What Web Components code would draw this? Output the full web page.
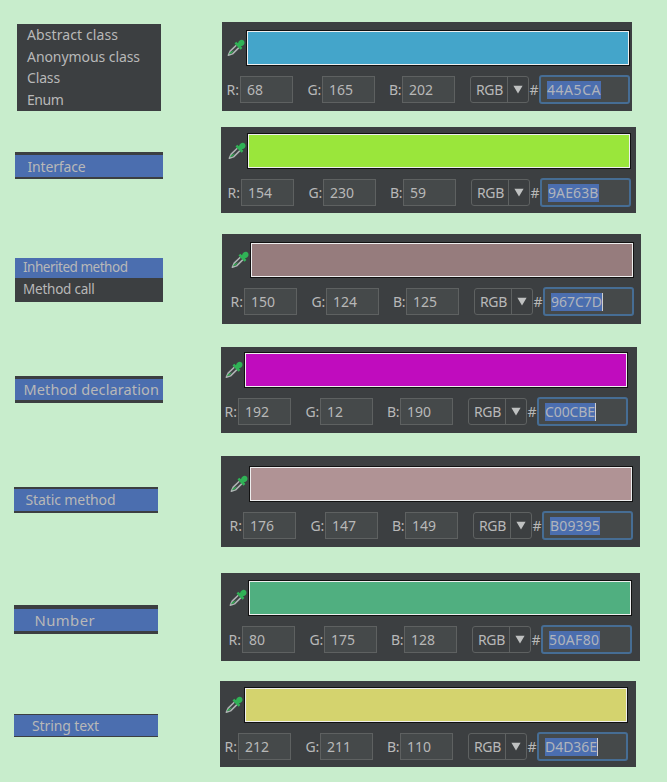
<!DOCTYPE html>
<html lang="en">
<head>
<meta charset="utf-8">
<title>Syntax colours</title>
<style>
html, body { margin: 0; padding: 0; }
body { width: 667px; height: 782px; overflow: hidden; background: #c8edcc; color: #b8b8b8; font: 14px "Noto Sans", "Open Sans", sans-serif; }
</style>
</head>
<body>
<colour-sheet></colour-sheet>
<script>
// Text run spread to an exact advance width with letter spacing.
class FitText extends HTMLElement {
  connectedCallback() {
    const root = this.attachShadow({ mode: 'open' });
    root.innerHTML = `<style>:host{display:inline-block;white-space:pre}span{display:inline-block}</style><span><slot></slot></span>`;
    const w = parseFloat(this.getAttribute('w'));
    if (!w) return;
    const span = root.querySelector('span');
    const n = this.textContent.length;
    const natural = span.getBoundingClientRect().width;
    this.style.letterSpacing = ((w - natural) / n).toFixed(3) + 'px';
  }
}
customElements.define('fit-text', FitText);

class EyeDropper extends HTMLElement {
  connectedCallback() {
    this.attachShadow({ mode: 'open' }).innerHTML = `
<style>:host{display:block;width:18px;height:18px}svg{display:block}</style>
<svg width="18" height="18" viewBox="0 0 18 18">
  <path d="M9.3 6.2 3.2 12.1 1.3 16.3 5.6 14.9 11.9 8.6" fill="none" stroke="#aeb3b3" stroke-width="1.5" stroke-linejoin="round"/>
  <path d="M3 13.2 7.2 11.3 4.9 14 1.8 15.6z" fill="#2fae50"/>
  <path d="M7.5 4.5 9.2 2.7 11 4.2C11.4 2 13.2.7 15 .8 17.1 1 18 3.1 17.3 4.9 16.7 6.2 15.5 6.9 13.9 7.1L15.4 8.9 13.6 10.7z" fill="#30b256"/>
</svg>`;
  }
}
customElements.define('eye-dropper', EyeDropper);

class ChannelField extends HTMLElement {
  connectedCallback() {
    this.attachShadow({ mode: 'open' }).innerHTML = `
<style>
:host{display:flex;height:27px;line-height:27px}
.name{box-sizing:border-box;display:flex;justify-content:flex-end;width:var(--lead);padding-right:1px;flex:none}
.box{box-sizing:border-box;width:53px;height:27px;padding-left:6px;border:1px solid #5e6161;background:#45494a;line-height:26px}
</style>
<div class="name"><fit-text w="${this.getAttribute('nw')}">${this.getAttribute('name')}:</fit-text></div>
<div class="box"><slot></slot></div>`;
  }
}
customElements.define('channel-field', ChannelField);

class ModeSelect extends HTMLElement {
  connectedCallback() {
    this.attachShadow({ mode: 'open' }).innerHTML = `
<style>
:host{display:flex;box-sizing:border-box;width:59px;height:27px;margin-left:15px;border:1px solid #5e6161;border-radius:3px;line-height:25px}
.text{box-sizing:border-box;width:37px;padding-left:5px;border-right:1px solid #5e6161}
.arrow{flex:1;display:flex;align-items:center;justify-content:center}
</style>
<div class="text"><fit-text w="27">RGB</fit-text></div>
<div class="arrow"><svg width="10" height="9" viewBox="0 0 10 9"><path d="M.4.8h9.2L5 8.4z" fill="#bfc1c1"/></svg></div>`;
  }
}
customElements.define('mode-select', ModeSelect);

class HexField extends HTMLElement {
  connectedCallback() {
    this.attachShadow({ mode: 'open' }).innerHTML = `
<style>
:host{display:flex;align-items:center;box-sizing:border-box;width:91px;height:29px;margin-top:-1px;padding-left:6px;border:2px solid #466d94;border-radius:3px;background:#45494a}
.sel{height:18px;line-height:18px;background:#4b6eaf;color:#b0b4bc;overflow:hidden}
.caret{width:1px;height:18px;background:#d0d0d0}
</style>
<div class="sel"><fit-text w="${this.getAttribute('w')}">${this.getAttribute('value')}</fit-text></div>${this.hasAttribute('caret') ? '<div class="caret"></div>' : ''}`;
  }
}
customElements.define('hex-field', HexField);

class ColourPicker extends HTMLElement {
  connectedCallback() {
    const a = n => this.getAttribute(n);
    const [r, g, b] = a('rgb').split(',');
    this.attachShadow({ mode: 'open' }).innerHTML = `
<style>
:host{display:block;box-sizing:border-box;background:#3c3f41;overflow:hidden}
.top{display:flex;height:36px}
eye-dropper{margin:9px 1px 0 1px}
.swatch{box-sizing:border-box;width:384px;height:36px;border:1px solid #111;box-shadow:inset 0 0 0 1px #eee;background:#${a('hex')}}
.fields{display:flex;margin-top:10px;height:27px}
.hash{width:10px;line-height:27px;display:flex;justify-content:center}
</style>
<div class="top"><eye-dropper></eye-dropper><div class="swatch"></div></div>
<div class="fields">
  <channel-field name="R" nw="12.5" style="--lead:14px">${r}</channel-field>
  <channel-field name="G" nw="13.5" style="--lead:29px">${g}</channel-field>
  <channel-field name="B" nw="12" style="--lead:27px">${b}</channel-field>
  <mode-select></mode-select>
  <div class="hash"><fit-text w="9">#</fit-text></div>
  <hex-field value="${a('hex')}" w="${a('hw')}"${this.hasAttribute('caret') ? ' caret' : ''}></hex-field>
</div>`;
  }
}
customElements.define('colour-picker', ColourPicker);

class TokenList extends HTMLElement {
  connectedCallback() {
    this.attachShadow({ mode: 'open' }).innerHTML = `
<style>:host{display:block;box-sizing:border-box;background:#3c3f41;overflow:hidden}</style><slot></slot>`;
  }
}
customElements.define('token-list', TokenList);

class TokenItem extends HTMLElement {
  connectedCallback() {
    this.attachShadow({ mode: 'open' }).innerHTML = `
<style>:host{display:block;box-sizing:border-box;white-space:nowrap}:host([selected]){background:#4b6eaf}</style><slot></slot>`;
  }
}
customElements.define('token-item', TokenItem);

// box: left, top inside the row, width, height, padding above the first item
// items: text, indent, advance width, font size, item height, line height, selected
const ROWS = [
  { h: 119, box: [17, 24, 144, 87, 0], items: [['Abstract class', 10, 91, 14, 21, 22], ['Anonymous class', 10, 113, 14, 22, 23], ['Class', 10, 33, 14, 21, 22], ['Enum', 10, 36.5, 14, 22, 23]],
    p: [222, 22, 410, 89, 246, 30], rgb: '68,165,202', hex: '44A5CA', hw: 54 },
  { h: 104, box: [15, 33, 148, 27, 3], items: [['Interface', 12.5, 58, 14, 22, 24, 1]],
    p: [221, 8, 415, 86, 247, 14], rgb: '154,230,59', hex: '9AE63B', hw: 50.5 },
  { h: 112, box: [15, 35, 148, 44, 0], items: [['Inherited method', 8, 104.5, 13.5, 20, 19, 1], ['Method call', 8, 71.5, 13.5, 24, 22]],
    p: [222, 11, 419, 90, 250, 19], rgb: '150,124,125', hex: '967C7D', hw: 51, caret: 1 },
  { h: 110, box: [15, 41, 148, 27, 3], items: [['Method declaration', 8.5, 135.5, 14.5, 21, 21, 1]],
    p: [221, 12, 416, 86, 244, 17], rgb: '192,12,190', hex: 'C00CBE', hw: 50, caret: 1 },
  { h: 115, box: [14, 42, 144, 26, 2], items: [['Static method', 11.5, 90, 14, 22, 22, 1]],
    p: [221, 11, 419, 91, 249, 21], rgb: '176,147,149', hex: 'B09395', hw: 50 },
  { h: 110, box: [14, 45, 144, 29, 4], items: [['Number', 20.5, 60.5, 14.8, 22, 23, 1]],
    p: [221, 13, 419, 88, 248, 20], rgb: '80,175,128', hex: '50AF80', hw: 50.5 },
  { h: 112, box: [14, 44, 144, 23, 1], items: [['String text', 18, 67, 14, 21, 21, 1]],
    p: [220, 11, 416, 86, 244, 17], rgb: '212,211,110', hex: 'D4D36E', hw: 52, caret: 1 }
];

class ColourSheet extends HTMLElement {
  connectedCallback() {
    this.attachShadow({ mode: 'open' }).innerHTML = `
<style>
:host{display:flex;flex-direction:column;width:667px;height:782px;overflow:hidden}
.row{display:flex;align-items:flex-start;flex:none}
token-list,colour-picker{flex:none}
</style>` + ROWS.map(r => {
      const [x, y, w, h, pad] = r.box, [px, py, pw, ph, sx, sy] = r.p;
      return `<div class="row" style="height:${r.h}px">
<token-list style="margin:${y}px 0 0 ${x}px;width:${w}px;height:${h}px;padding-top:${pad}px">${r.items.map(([t, ind, tw, fs, ih, lh, sel]) =>
        `<token-item${sel ? ' selected' : ''} style="padding-left:${ind}px;height:${ih}px;line-height:${lh}px;font-size:${fs}px"><fit-text w="${tw}">${t}</fit-text></token-item>`).join('')}</token-list>
<colour-picker rgb="${r.rgb}" hex="${r.hex}" hw="${r.hw}"${r.caret ? ' caret' : ''} style="margin:${py}px 0 0 ${px - x - w}px;width:${pw}px;height:${ph}px;padding:${sy - py}px 0 0 ${sx - 20 - px}px"></colour-picker>
</div>`;
    }).join('');
  }
}
customElements.define('colour-sheet', ColourSheet);
</script>
</body>
</html>
